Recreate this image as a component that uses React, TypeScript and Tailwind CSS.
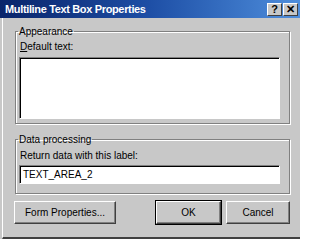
export default function App() {
  const font = { fontFamily: '"Liberation Sans", Arial, sans-serif' };

  return (
    <div
      className="w-[300px] h-[239px] bg-[#c8c8c8] text-[10px] leading-[13px] text-black overflow-hidden flex flex-col"
      style={font}
    >
      {/* title bar */}
      <div className="h-[18px] flex items-center justify-between bg-gradient-to-r from-[#0a246a] via-[#1e4fa6] to-[#4f8edc] pl-[5px] pr-[2px] shrink-0">
        <span className="text-white font-bold text-[11px] tracking-[-0.35px] whitespace-nowrap">
          Multiline Text Box Properties
        </span>
        <div className="flex gap-[1px]">
          <TitleButton label="?" />
          <TitleButton label="✕" />
        </div>
      </div>

      {/* body */}
      <div className="flex-1 ml-[2px] border-l border-white border-b-2 border-b-[#404040] pl-[12px] pr-[10px] flex flex-col">
        <fieldset className="mt-[7px] border border-[#808080] shadow-[1px_1px_0_#fff,inset_1px_1px_0_#fff] pl-[3px] pr-[9px] pb-[4px]">
          <legend className="px-[1px] -ml-[1px]">Appearance</legend>
          <div className="pt-[2px] pl-[1px]">
            <span className="underline">D</span>efault text:
          </div>
          <div className="mt-[4px] h-[62px] bg-white border border-t-[#808080] border-l-[#808080] border-b-white border-r-white shadow-[inset_1px_1px_0_#000]" />
        </fieldset>

        <fieldset className="mt-[9px] border border-[#808080] shadow-[1px_1px_0_#fff,inset_1px_1px_0_#fff] pl-[3px] pr-[9px] pb-[9px]">
          <legend className="px-[1px] -ml-[1px]">Data processing</legend>
          <div className="pt-[3px] pl-[1px]">Return data with this label:</div>
          <div className="mt-[3px] h-[19px] bg-white border border-t-[#808080] border-l-[#808080] border-b-white border-r-white shadow-[inset_1px_1px_0_#000] flex items-center pl-[3px]">
            TEXT_AREA_2
          </div>
        </fieldset>

        <div className="mt-[7px] -ml-[1px] flex items-start">
          <DialogButton className="w-[102px]">Form Properties...</DialogButton>
          <div className="flex-1" />
          <DialogButton className="w-[65px] outline outline-1 outline-black">OK</DialogButton>
          <DialogButton className="w-[64px] ml-[5px]">Cancel</DialogButton>
        </div>
      </div>
    </div>
  );
}

function TitleButton({ label }: { label: string }) {
  return (
    <div className="w-[15px] h-[13px] bg-[#c8c8c8] border border-t-white border-l-white border-b-[#404040] border-r-[#404040] flex items-center justify-center text-[11px] font-bold leading-none">
      {label}
    </div>
  );
}

function DialogButton({ children, className = "" }: { children: React.ReactNode; className?: string }) {
  return (
    <div
      className={`h-[23px] bg-[#c8c8c8] border border-t-white border-l-white border-b-[#404040] border-r-[#404040] shadow-[inset_-1px_-1px_0_#808080] flex items-center justify-center ${className}`}
    >
      {children}
    </div>
  );
}
